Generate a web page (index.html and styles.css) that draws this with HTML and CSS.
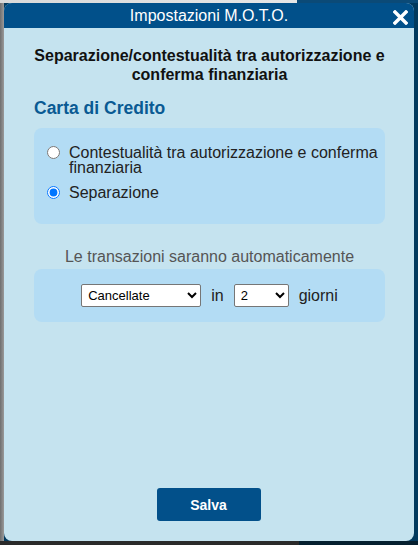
FILE: index.html
```html
<!DOCTYPE html>
<html lang="it">
<head>
<meta charset="utf-8">
<title>Impostazioni M.O.T.O.</title>
<link rel="stylesheet" href="styles.css">
</head>
<body>
<div class="dialog">
  <div class="dialog-header">
    <span class="dialog-title">Impostazioni M.O.T.O.</span>
    <span class="close" aria-label="Chiudi">
      <svg width="15" height="15" viewBox="0 0 15 15"><path d="M2 2 L13 13 M13 2 L2 13" stroke="#fff" stroke-width="3.4" stroke-linecap="square"/></svg>
    </span>
  </div>
  <div class="dialog-body">
    <h2 class="subtitle">Separazione/contestualità tra autorizzazione e conferma finanziaria</h2>
    <h3 class="section-title">Carta di Credito</h3>
    <div class="panel radios">
      <label class="radio-row"><input type="radio" name="mode"><span>Contestualità tra autorizzazione e conferma finanziaria</span></label>
      <label class="radio-row"><input type="radio" name="mode" checked><span>Separazione</span></label>
    </div>
    <p class="note">Le transazioni saranno automaticamente</p>
    <div class="panel selects">
      <select class="sel sel-action"><option>Cancellate</option><option>Confermate</option></select>
      <span class="word">in</span>
      <select class="sel sel-days"><option>2</option><option>1</option><option>3</option></select>
      <span class="word">giorni</span>
    </div>
    <div class="actions">
      <button class="btn">Salva</button>
    </div>
  </div>
</div>
</body>
</html>
```
FILE: styles.css
```css
html, body { height: 100%; }
body {
  margin: 0;
  font-family: "Liberation Sans", Arial, sans-serif;
  background:
    linear-gradient(to right, #d9d9d9 0, #e6e6e6 297px, #0b4a77 297px) top left / 100% 3px no-repeat,
    linear-gradient(to right, #2a2a2a 0, #2a2a2a 299px, #05202f 299px) bottom left / 100% 4px no-repeat,
    linear-gradient(to right, #6f6f6f, #9a9a9a) left top / 4px 100% no-repeat,
    #023a5e;
  overflow: hidden;
}
.dialog {
  box-sizing: border-box;
  margin: 3px 4px 0 4px;
  width: 410px;
  height: 538px;
  border-radius: 8px;
  overflow: hidden;
  background: #c5e3ef;
  display: flex;
  flex-direction: column;
}
.dialog-header {
  height: 25px;
  background: #01508a;
  display: flex;
  align-items: center;
  justify-content: center;
  position: relative;
  flex: none;
}
.dialog-title {
  color: #fff;
  font-size: 16px;
  line-height: 25px;
}
.close {
  position: absolute;
  right: 6px;
  top: 7px;
  width: 15px;
  height: 15px;
  display: block;
}
.close svg { display: block; }
.dialog-body {
  flex: 1;
  display: flex;
  flex-direction: column;
  padding: 18px 29px 20px 30px;
}
.subtitle {
  margin: 0;
  font-size: 16px;
  font-weight: bold;
  text-align: center;
  line-height: 19px;
  color: #111;
}
.section-title {
  margin: 14px 0 0 0;
  font-size: 17.5px;
  font-weight: bold;
  color: #0a5a93;
  line-height: 20px;
}
.panel {
  background: #b3dcf4;
  border-radius: 8px;
}
.radios {
  margin-top: 10px;
  padding: 17px 5px 24px 12px;
  display: flex;
  flex-direction: column;
  gap: 10px;
}
.radio-row {
  display: flex;
  align-items: flex-start;
  font-size: 16px;
  line-height: 15px;
  color: #222;
}
.radio-row input {
  margin: 1px 9px 0 1px;
  width: 13px;
  height: 13px;
  flex: none;
}
.note {
  margin: 24px 0 0 0;
  text-align: center;
  font-size: 16px;
  color: #555;
  line-height: 18px;
}
.selects {
  margin-top: 3px;
  height: 53px;
  display: flex;
  align-items: center;
  justify-content: center;
  gap: 10px;
}
.sel {
  height: 23px;
  font-family: "Liberation Sans", Arial, sans-serif;
  font-size: 13px;
  color: #000;
  background: #fff;
  border: 1px solid #767676;
  border-radius: 2px;
  padding: 0 2px;
}
.sel-action { width: 120px; }
.sel-days { width: 55px; }
.word {
  font-size: 16px;
  color: #222;
}
.actions {
  margin-top: auto;
  display: flex;
  justify-content: center;
  padding-right: 2px;
}
.btn {
  width: 104px;
  height: 33px;
  background: #02508a;
  color: #fff;
  border: none;
  border-radius: 3px;
  font-family: "Liberation Sans", Arial, sans-serif;
  font-size: 14px;
  font-weight: bold;
}
```
